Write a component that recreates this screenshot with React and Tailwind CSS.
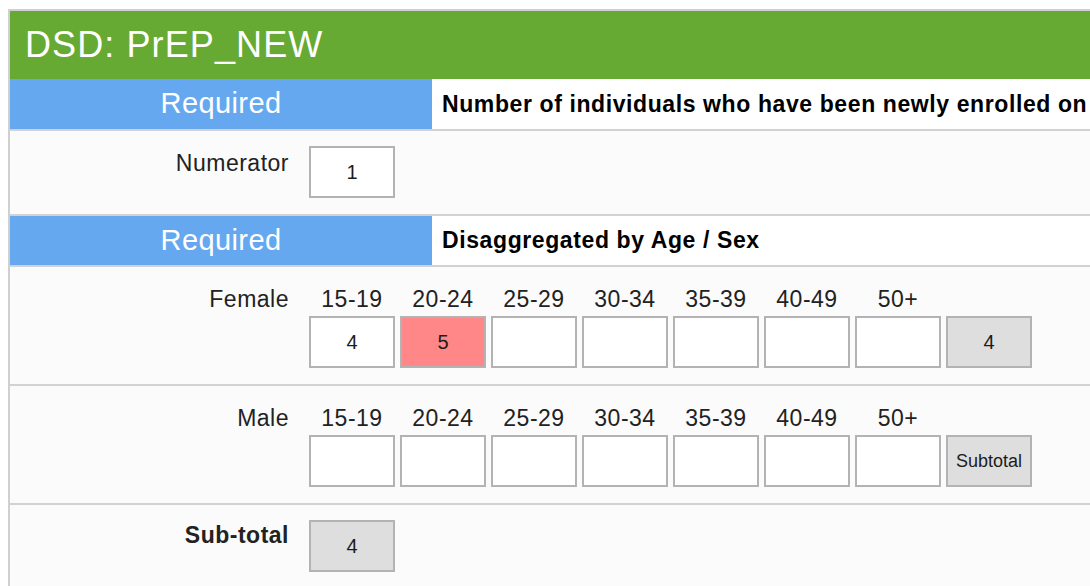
const AGES = ["15-19", "20-24", "25-29", "30-34", "35-39", "40-49", "50+"];

function Cell({ value, tone = "white", small = false }) {
  const bg =
    tone === "error" ? "bg-[#ff8787]" : tone === "total" ? "bg-[#dedede]" : "bg-white";
  return (
    <div
      className={`w-[86px] h-[52px] border-2 border-[#b3b3b3] ${bg} flex items-center justify-center text-[#1c1c1c] ${
        small ? "text-[18px]" : "text-[20px]"
      }`}
    >
      {value}
    </div>
  );
}

function SectionBar({ children, tall = false }) {
  return (
    <div className={`flex ${tall ? "h-[52px]" : "h-[51px]"} border-b-2 border-[#d2d2d2]`}>
      <div className="w-[422px] shrink-0 bg-[#66a8ef] flex items-center justify-center text-white text-[29px] tracking-[0.4px]">
        Required
      </div>
      <div className="flex-1 bg-white flex items-center pl-[10px] font-bold text-[23px] tracking-[0.6px] text-black whitespace-nowrap overflow-hidden">
        {children}
      </div>
    </div>
  );
}

function Label({ children, bold = false }) {
  return (
    <div
      className={`w-[279px] shrink-0 text-right text-[23px] leading-[26px] tracking-[0.5px] text-[#222] ${
        bold ? "font-bold" : ""
      }`}
    >
      {children}
    </div>
  );
}

function AgeRow({ label, values, total, totalSmall }) {
  return (
    <div className="flex gap-[20px] pt-[19px] pb-[16px] border-b-2 border-[#d2d2d2]">
      <Label>{label}</Label>
      <div className="flex flex-col gap-[4px]">
        <div className="grid grid-cols-[repeat(8,86px)] gap-x-[5px]">
          {AGES.map((a) => (
            <div key={a} className="text-center text-[23px] leading-[26px] tracking-[0.5px] text-[#222]">
              {a}
            </div>
          ))}
          <div />
        </div>
        <div className="grid grid-cols-[repeat(8,86px)] gap-x-[5px]">
          {values.map((v, i) => (
            <Cell key={i} value={v.value} tone={v.tone} />
          ))}
          <Cell value={total} tone="total" small={totalSmall} />
        </div>
      </div>
    </div>
  );
}

export default function App() {
  const female = [
    { value: "4" },
    { value: "5", tone: "error" },
    { value: "" },
    { value: "" },
    { value: "" },
    { value: "" },
    { value: "" },
  ];
  const male = AGES.map(() => ({ value: "" }));

  return (
    <div className="w-[1090px] h-[586px] overflow-hidden bg-white font-['Liberation_Sans',Arial,sans-serif]">
      <div className="ml-[8px] mt-[9px] w-[1200px] border-l-2 border-t-2 border-[#d0d0d0] bg-[#fbfbfb]">
        <div className="h-[68px] bg-[#66aa33] flex items-center pl-[15px] text-white text-[36px] tracking-[1.1px]">
          DSD: PrEP_NEW
        </div>

        <SectionBar tall>Number of individuals who have been newly enrolled on oral antiretroviral pre-exposure prophylaxis</SectionBar>

        <div className="flex gap-[20px] pt-[15px] pb-[16px] border-b-2 border-[#d2d2d2]">
          <div className="pt-[4px]">
            <Label>Numerator</Label>
          </div>
          <Cell value="1" />
        </div>

        <SectionBar>Disaggregated by Age / Sex</SectionBar>

        <AgeRow label="Female" values={female} total="4" />
        <AgeRow label="Male" values={male} total="Subtotal" totalSmall />

        <div className="flex gap-[20px] pt-[15px] pb-[30px]">
          <div className="pt-[2px]">
            <Label bold>Sub-total</Label>
          </div>
          <Cell value="4" tone="total" />
        </div>
      </div>
    </div>
  );
}
